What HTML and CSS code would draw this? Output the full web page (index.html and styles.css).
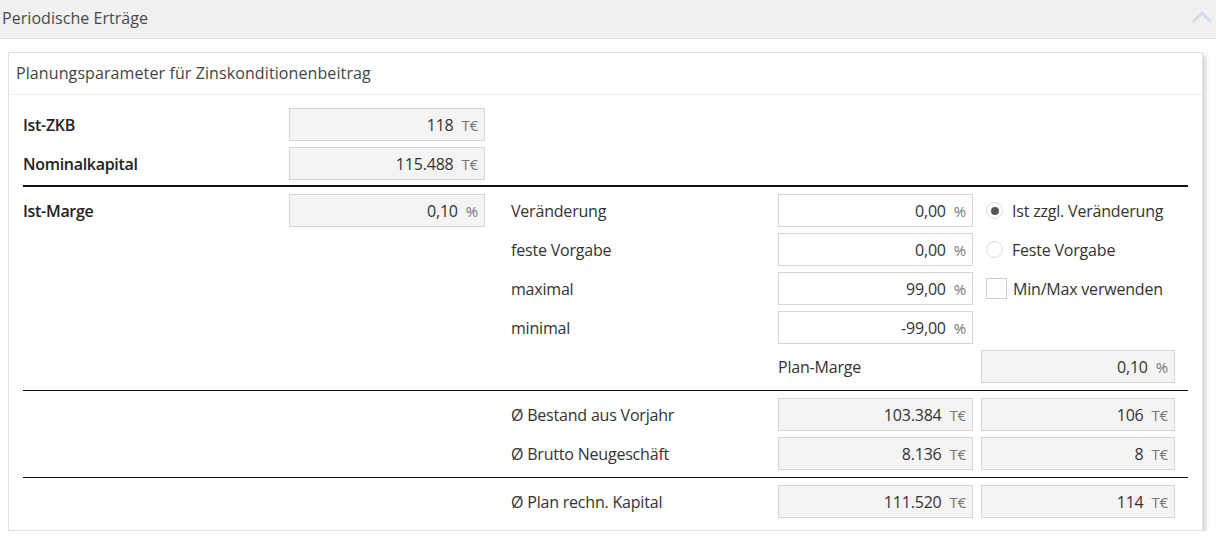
FILE: index.html
```html
<!DOCTYPE html>
<html lang="de">
<head>
<meta charset="utf-8">
<title>Periodische Erträge</title>
<link rel="stylesheet" href="styles.css">
</head>
<body>
<div class="panel-head">
  <span class="panel-title">Periodische Erträge</span>
  <svg class="chev" width="22" height="14" viewBox="0 0 22 14"><path d="M3 11 L11 3 L19 11" fill="none" stroke="#d3dde7" stroke-width="3" stroke-linecap="round" stroke-linejoin="round"/></svg>
</div>
<div class="card">
  <div class="card-head">Planungsparameter für Zinskonditionenbeitrag</div>
  <div class="card-body">
    <div class="grid">
      <div class="lbl strong">Ist-ZKB</div>
      <div class="field ro c2"><span class="val">118</span><span class="unit">T€</span></div>
      <div class="lbl strong">Nominalkapital</div>
      <div class="field ro c2"><span class="val">115.488</span><span class="unit">T€</span></div>
    </div>
    <div class="rule thick"></div>
    <div class="grid">
      <div class="lbl strong r1">Ist-Marge</div>
      <div class="field ro c2 r1"><span class="val">0,10</span><span class="unit">%</span></div>

      <div class="lbl c4 r1">Veränderung</div>
      <div class="field c5 r1"><span class="val">0,00</span><span class="unit">%</span></div>
      <div class="opt c7 r1"><span class="radio on"></span>Ist zzgl. Veränderung</div>

      <div class="lbl c4 r2">feste Vorgabe</div>
      <div class="field c5 r2"><span class="val">0,00</span><span class="unit">%</span></div>
      <div class="opt c7 r2"><span class="radio"></span>Feste Vorgabe</div>

      <div class="lbl c4 r3">maximal</div>
      <div class="field c5 r3"><span class="val">99,00</span><span class="unit">%</span></div>
      <div class="opt c7 r3"><span class="check"></span>Min/Max verwenden</div>

      <div class="lbl c4 r4">minimal</div>
      <div class="field c5 r4"><span class="val">-99,00</span><span class="unit">%</span></div>

      <div class="lbl c5 r5">Plan-Marge</div>
      <div class="field ro c7 r5"><span class="val">0,10</span><span class="unit">%</span></div>
    </div>
    <div class="rule"></div>
    <div class="grid">
      <div class="lbl c4 r1">Ø Bestand aus Vorjahr</div>
      <div class="field ro c5 r1"><span class="val">103.384</span><span class="unit">T€</span></div>
      <div class="field ro c7 r1"><span class="val">106</span><span class="unit">T€</span></div>
      <div class="lbl c4 r2">Ø Brutto Neugeschäft</div>
      <div class="field ro c5 r2"><span class="val">8.136</span><span class="unit">T€</span></div>
      <div class="field ro c7 r2"><span class="val">8</span><span class="unit">T€</span></div>
    </div>
    <div class="rule"></div>
    <div class="grid">
      <div class="lbl c4 r1">Ø Plan rechn. Kapital</div>
      <div class="field ro c5 r1"><span class="val">111.520</span><span class="unit">T€</span></div>
      <div class="field ro c7 r1"><span class="val">114</span><span class="unit">T€</span></div>
    </div>
  </div>
</div>
</body>
</html>
```
FILE: styles.css
```css
* { box-sizing: border-box; }
body {
  margin: 0;
  background: #fff;
  font-family: "Open Sans", "Noto Sans", sans-serif;
  font-size: 16px;
  letter-spacing: -0.2px;
  color: #333;
}
.panel-head {
  height: 39px;
  background: #f1f1f1;
  border-bottom: 1px solid #dedede;
  display: flex;
  align-items: center;
  justify-content: space-between;
  padding: 0 3px 0 2px;
}
.panel-title {
  color: #4a4a4a;
  font-size: 16px;
  letter-spacing: 0.05px;
  margin-top: -3px;
}
.chev { margin-top: -5px; }
.card {
  margin: 13px 13px 0 8px;
  border: 1px solid #e0e0e0;
  box-shadow: 3px 3px 4px rgba(0,0,0,0.16);
  background: #fff;
}
.card-head {
  height: 42px;
  padding: 0 0 2px 7px;
  display: flex;
  align-items: center;
  color: #444;
  font-size: 16px;
  letter-spacing: 0.1px;
  border-bottom: 1px solid #eeeeee;
}
.card-body {
  padding: 13px 14px 12px 14px;
}
.grid {
  display: grid;
  grid-template-columns: 266px 196px 26px 267px 195px 8px 194px;
  grid-auto-rows: 33px;
  row-gap: 6px;
}
.lbl {
  grid-column: 1;
  display: flex;
  align-items: center;
  color: #333;
  white-space: nowrap;
}
.lbl.strong { font-weight: 600; color: #222; letter-spacing: -0.3px; }
.c2 { grid-column: 2; }
.c4 { grid-column: 4; }
.c5 { grid-column: 5; }
.c7 { grid-column: 7; }
.r1 { grid-row: 1; }
.r2 { grid-row: 2; }
.r3 { grid-row: 3; }
.r4 { grid-row: 4; }
.r5 { grid-row: 5; }
.field {
  border: 1px solid #d6d6d6;
  background: #fff;
  display: flex;
  align-items: center;
  justify-content: flex-end;
  padding-right: 6px;
  white-space: nowrap;
}
.field.ro { background: #f4f4f4; }
.val { color: #333; }
.unit { color: #777; margin-left: 8px; font-size: 15px; }
.rule { height: 1px; background: #111; margin: 7px 0 7px 0; }
.rule.thick { height: 2px; margin: 5px 0 7px 0; }
.opt {
  display: flex;
  align-items: center;
  color: #333;
  white-space: nowrap;
  padding-left: 5px;
}
.radio {
  width: 17px;
  height: 17px;
  border: 1px solid #dcdcdc;
  border-radius: 50%;
  margin-right: 9px;
  display: inline-flex;
  align-items: center;
  justify-content: center;
  background: #fff;
}
.radio.on::after {
  content: "";
  width: 8px;
  height: 8px;
  border-radius: 50%;
  background: #555;
}
.check {
  width: 21px;
  height: 21px;
  border: 1px solid #cfcfcf;
  background: #fff;
  margin-right: 6px;
}
```
